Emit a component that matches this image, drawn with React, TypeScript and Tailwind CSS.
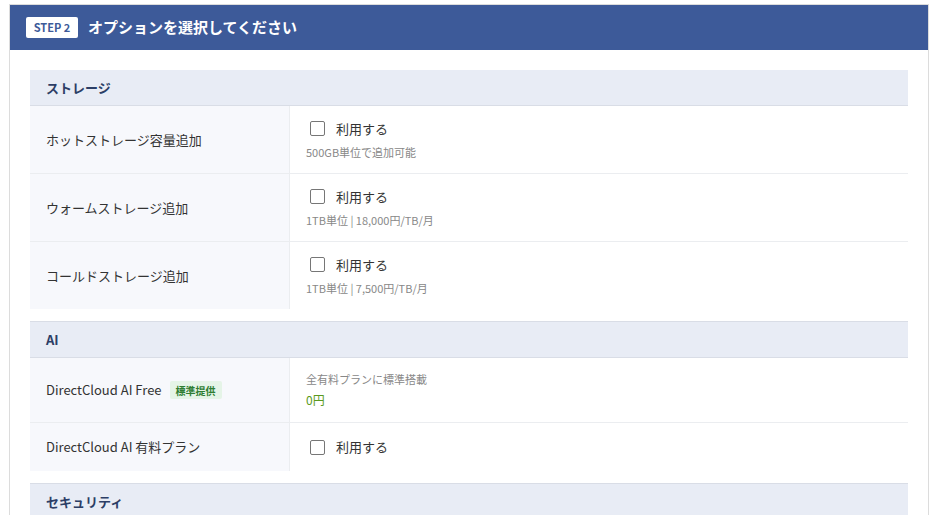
import React from "react";

const font = { fontFamily: '"Noto Sans CJK JP", "Noto Sans", sans-serif' };

function Check() {
  return (
    <div className="flex items-center">
      <span className="ml-[4px] w-[15px] h-[15px] border border-[#767676] rounded-[2px] bg-white" />
      <span className="ml-[11px] text-[13px] text-[#333]">利用する</span>
    </div>
  );
}

function Row({ label, children, h, last }: { label: React.ReactNode; children: React.ReactNode; h: string; last?: boolean }) {
  return (
    <div className={`flex ${h} ${last ? "" : "border-b border-[#ebedf0]"}`}>
      <div className="w-[260px] shrink-0 bg-[#f7f8fc] border-r border-[#ebedf0] flex items-center pl-4 text-[13px] text-[#333]">
        {label}
      </div>
      <div className="flex-1 bg-white pl-4 flex flex-col justify-center">{children}</div>
    </div>
  );
}

function Sub({ children }: { children: React.ReactNode }) {
  return <div className="text-[11px] text-[#888] mt-[6px] leading-[16px]">{children}</div>;
}

function SectionHead({ title, top }: { title: string; top?: boolean }) {
  return (
    <div className={`${top ? "h-[37px] border-t" : "h-[36px]"} bg-[#e8ecf5] border-b border-[#d9dde6] flex items-center pl-4 text-[13px] font-bold text-[#2c3e66]`}>
      {title}
    </div>
  );
}

export default function App() {
  return (
    <div style={font} className="w-[931px] h-[515px] overflow-hidden bg-white pt-[4px] pl-[9px] pr-[2px]">
      <div className="border border-[#dcdcdc] w-[920px] min-h-[600px]">
        <div className="h-[45px] bg-[#3d5a99] flex items-center pl-4">
          <span className="w-[52px] h-[21px] bg-white rounded-[2px] flex items-center justify-center text-[11px] font-bold text-[#3d5a99]">STEP 2</span>
          <span className="ml-[10px] text-[15px] font-bold text-white">オプションを選択してください</span>
        </div>
        <div className="px-5 pt-5">
          <div className="mb-[12px]">
            <SectionHead title="ストレージ" />
            <Row label="ホットストレージ容量追加" h="h-[68px]">
              <Check />
              <Sub>500GB単位で追加可能</Sub>
            </Row>
            <Row label="ウォームストレージ追加" h="h-[68px]">
              <Check />
              <Sub>1TB単位 | 18,000円/TB/月</Sub>
            </Row>
            <Row label="コールドストレージ追加" h="h-[67px]" last>
              <Check />
              <Sub>1TB単位 | 7,500円/TB/月</Sub>
            </Row>
          </div>
          <div className="mb-[12px]">
            <SectionHead title="AI" top />
            <Row
              label={
                <span className="flex items-center">
                  DirectCloud AI Free
                  <span className="ml-[8px] px-[6px] h-[18px] flex items-center rounded-[2px] bg-[#e5f4e7] text-[10px] font-bold text-[#2e7d32]">標準提供</span>
                </span>
              }
              h="h-[65px]"
            >
              <div className="text-[11px] text-[#888] leading-[16px]">全有料プランに標準搭載</div>
              <div className="text-[12px] text-[#5a9a1e] mt-[4px] leading-[18px]">0円</div>
            </Row>
            <Row label="DirectCloud AI 有料プラン" h="h-[48px]" last>
              <Check />
            </Row>
          </div>
          <div>
            <SectionHead title="セキュリティ" top />
          </div>
        </div>
      </div>
    </div>
  );
}
